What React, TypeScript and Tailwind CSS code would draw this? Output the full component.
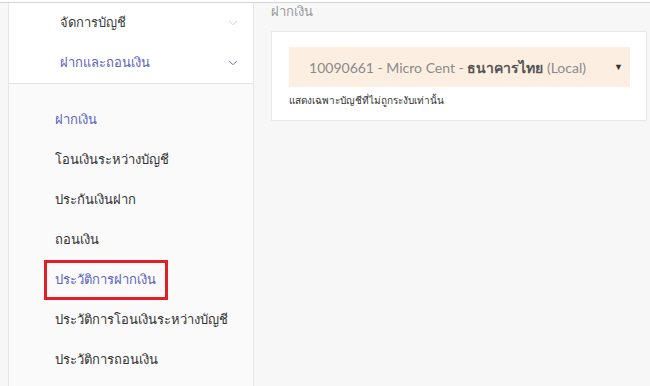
import { ChevronDown } from "lucide-react";

const subItems = [
  { label: "ฝากเงิน", active: true },
  { label: "โอนเงินระหว่างบัญชี" },
  { label: "ประกันเงินฝาก" },
  { label: "ถอนเงิน" },
  { label: "ประวัติการฝากเงิน", active: true, boxed: true },
  { label: "ประวัติการโอนเงินระหว่างบัญชี" },
  { label: "ประวัติการถอนเงิน" },
];

export default function App() {
  return (
    <div
      className="w-[650px] h-[386px] overflow-hidden bg-white pt-[2px]"
      style={{ fontFamily: "Lato, 'Noto Sans', Tahoma, sans-serif" }}
    >
      <div className="flex h-full border-t border-[#d4d4d4] bg-[#f7f7f7]">
        {/* Sidebar */}
        <div className="ml-[8px] w-[246px] shrink-0 flex flex-col border-l border-r border-[#e6e6e6] bg-[#fafafa]">
          <div className="bg-white border-b border-[#e3e3e3] pl-[51px] pr-[13px]">
            <div className="h-[40px] flex items-center justify-between text-[13px] text-[#3c3c3c] whitespace-nowrap">
              <span>จัดการบัญชี</span>
              <ChevronDown className="w-[14px] h-[14px] text-[#c8c8c8]" strokeWidth={1.5} />
            </div>
            <div className="h-[40px] flex items-center justify-between text-[13px] text-[#5b5fc4] whitespace-nowrap">
              <span>ฝากและถอนเงิน</span>
              <ChevronDown className="w-[14px] h-[14px] text-[#5b5fc4]" strokeWidth={1.5} />
            </div>
          </div>
          <div className="pt-[16px] flex flex-col">
            {subItems.map((it) => (
              <div key={it.label} className="h-[40px] flex items-center pl-[35px]">
                <span
                  className={`text-[13px] whitespace-nowrap pl-[8px] pr-[9px] py-[7px] border-[3px] ${
                    it.boxed ? "border-[#e01f26]" : "border-transparent"
                  } ${it.active ? "text-[#5b5fc4]" : "text-[#333333]"}`}
                >
                  {it.label}
                </span>
              </div>
            ))}
          </div>
        </div>

        {/* Main */}
        <div className="flex-1 pl-[17px] pr-[3px]">
          <div className="h-[28px] flex items-start text-[13px] leading-[16px] text-[#9a9a9a]">ฝากเงิน</div>
          <div className="bg-white border border-[#e8e8e8] pl-[17px] pr-[16px] pt-[15px] pb-[12px]">
            <div className="h-[40px] bg-[#fcefe2] flex items-center relative pr-[24px]">
              <div className="flex-1 text-center text-[14px] text-[#8a8a8a] whitespace-nowrap">
                10090661 - Micro Cent - <span className="font-bold text-[#555555]">ธนาคารไทย</span> (Local)
              </div>
              <span className="absolute right-[7px] top-[13px] text-[9px] text-[#333]">▼</span>
            </div>
            <div className="mt-[6px] text-[10px] text-[#333333] whitespace-nowrap">แสดงเฉพาะบัญชีที่ไม่ถูกระงับเท่านั้น</div>
          </div>
        </div>
      </div>
    </div>
  );
}
